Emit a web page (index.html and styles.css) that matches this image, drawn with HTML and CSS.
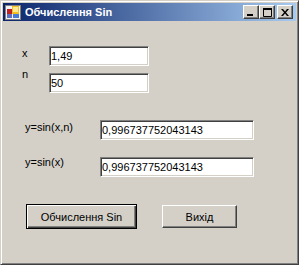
FILE: index.html
```html
<!DOCTYPE html>
<html lang="uk">
<head>
  <meta charset="UTF-8" />
  <title>Обчислення Sin</title>
  <link rel="stylesheet" href="styles.css">
</head>
<body>
  <div class="window">
    <div class="titlebar">
      <svg class="app-icon" width="16" height="16" viewBox="0 0 16 16">
        <rect x="0.5" y="1.5" width="15" height="14" fill="#d4d0c8" stroke="#808080" />
        <rect x="1" y="2" width="14" height="13" fill="#f4f4f4" />
        <rect x="2" y="5" width="5" height="5" fill="#c02020" />
        <rect x="7" y="2" width="7" height="8" fill="#f0c020" />
        <rect x="8" y="3" width="5" height="5" fill="#fce890" />
        <rect x="2" y="10" width="5" height="4" fill="#6070c0" />
        <rect x="8" y="10" width="6" height="4" fill="#4a7ad8" />
      </svg>
      <span class="title">Обчислення Sin</span>
      <div class="caption-buttons">
        <button class="cap-btn">
          <svg width="8" height="7" viewBox="0 0 8 7"><rect x="0" y="5" width="6" height="2" fill="#000" /></svg>
        </button>
        <button class="cap-btn">
          <svg width="9" height="9" viewBox="0 0 9 9"><path d="M0.5 0.5h8v8h-8z" fill="none" stroke="#000" /><rect x="0" y="0" width="9" height="2" fill="#000" /></svg>
        </button>
        <button class="cap-btn cap-close">
          <svg width="8" height="7" viewBox="0 0 8 7"><path d="M0 0h2l2 2.5L6 0h2L5 3.5 8 7H6L4 4.5 2 7H0l3-3.5z" fill="#000" /></svg>
        </button>
      </div>
    </div>

    <div class="client">
      <div class="row row-x">
        <label class="lbl lbl-short">x</label>
        <input class="field" type="text" value="1,49" />
      </div>
      <div class="row row-n">
        <label class="lbl lbl-short">n</label>
        <input class="field" type="text" value="50" />
      </div>
      <div class="row row-sum">
        <label class="lbl lbl-long">y=sin(x,n)</label>
        <input class="field field-wide" type="text" value="0,996737752043143" />
      </div>
      <div class="row row-sin">
        <label class="lbl lbl-long">y=sin(x)</label>
        <input class="field field-wide" type="text" value="0,996737752043143" />
      </div>

      <div class="actions">
        <button class="btn btn-default">Обчислення Sin</button>
        <button class="btn btn-exit">Вихід</button>
      </div>
    </div>
  </div>
</body>
</html>
```

FILE: styles.css
```css
:root {
  --face: #d4d0c8;
  --shadow: #808080;
  --dark: #404040;
  --ui-font: 'Liberation Sans', Arial, sans-serif;
}

body {
  margin: 0;
  font-family: var(--ui-font);
  font-size: 11px;
  color: #000;
}

.window {
  width: 299px;
  height: 265px;
  box-sizing: border-box;
  padding: 2px;
  background-color: var(--face);
  border: 1px solid;
  border-color: var(--face) var(--dark) var(--dark) var(--face);
  box-shadow: inset 1px 1px #fff, inset -1px -1px var(--shadow);
}

/* title bar */
.titlebar {
  display: flex;
  align-items: flex-start;
  height: 18px;
  background: linear-gradient(to right, #0a246a, #a6caf0);
}

.app-icon {
  margin: 1px 0 0 2px;
  flex-shrink: 0;
}

.title {
  margin-left: 4px;
  padding-top: 2px;
  line-height: 15px;
  font-weight: bold;
  font-size: 11px;
  color: #fff;
}

.caption-buttons {
  display: flex;
  margin: 2px 3px 0 auto;
}

.cap-btn {
  width: 16px;
  height: 14px;
  padding: 0;
  display: flex;
  align-items: center;
  justify-content: center;
  background-color: var(--face);
  border: 1px solid;
  border-color: #fff var(--dark) var(--dark) #fff;
  box-shadow: inset -1px -1px var(--shadow);
}

.cap-close {
  margin-left: 2px;
}

/* form area */
.client {
  padding: 25px 0 0 19px;
}

.row {
  display: flex;
  align-items: flex-start;
}

.lbl {
  line-height: 13px;
}

.lbl-short {
  width: 27px;
}

.lbl-long {
  width: 75px;
  margin-left: 3px;
}

.field {
  width: 100px;
  height: 20px;
  box-sizing: border-box;
  margin: 0;
  padding: 0 0 0 1px;
  font-family: var(--ui-font);
  font-size: 11px;
  color: #000;
  background-color: #fff;
  border: 1px solid;
  border-color: var(--shadow) #fff #fff var(--shadow);
  box-shadow: inset 1px 1px var(--dark), inset -1px -1px var(--face);
  outline: none;
}

.field-wide {
  width: 154px;
}

.row-x .lbl {
  margin-top: 1px;
}

.row-n {
  margin-top: 2px;
}

.row-n .field {
  margin-top: 5px;
}

.row-sum {
  margin-top: 27px;
}

.row-sum .lbl {
  margin-top: 1px;
}

.row-sin {
  margin-top: 16px;
}

.row-sin .field {
  margin-top: 1px;
}

/* buttons */
.actions {
  display: flex;
  align-items: center;
  gap: 25px;
  margin-top: 27px;
  padding-left: 4px;
}

.btn {
  height: 23px;
  padding: 0;
  font-family: var(--ui-font);
  font-size: 11px;
  color: #000;
  background-color: var(--face);
  border: 1px solid;
  border-color: #fff var(--dark) var(--dark) #fff;
  box-shadow: inset -1px -1px var(--shadow);
}

.btn-default {
  width: 111px;
  height: 25px;
  border-color: #000;
  box-shadow: inset 1px 1px #fff, inset -1px -1px var(--dark), inset -2px -2px var(--shadow);
}

.btn-exit {
  width: 75px;
}
```
